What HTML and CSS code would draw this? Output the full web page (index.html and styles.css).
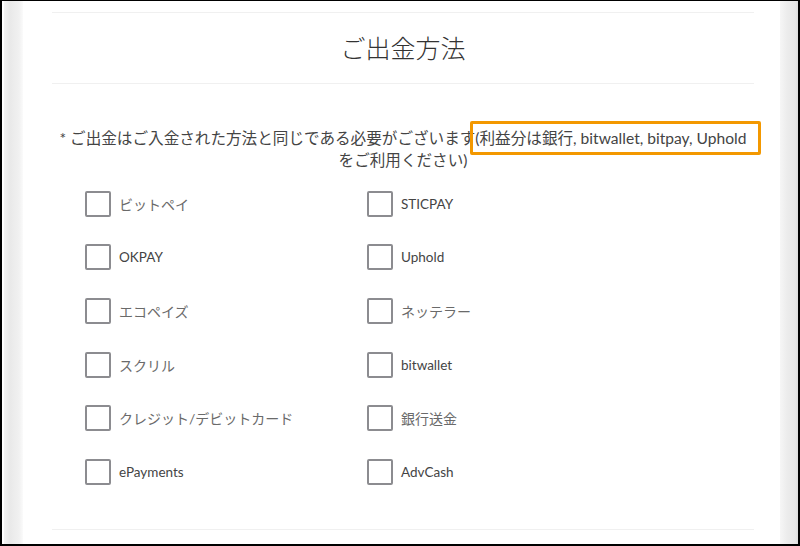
FILE: index.html
```html
<!DOCTYPE html>
<html lang="ja">
<head>
    <meta charset="UTF-8">
    <meta name="viewport" content="width=device-width, initial-scale=1.0">
    <title>ご出金方法</title>
    <link rel="stylesheet" href="styles.css">
</head>
<body>
    <div class="frame">
        <div class="side side-left"></div>
        <div class="card">
            <div class="panel">
                <h1 class="title">ご出金方法</h1>
                <p class="note">* ご出金はご入金された方法と同じである必要がございます<span class="mark">(利益分は銀行, bitwallet, bitpay, Uphold</span><br>をご利用ください)</p>

                <div class="methods">
                    <label class="method"><input type="checkbox"><span class="jp">ビットペイ</span></label>
                    <label class="method"><input type="checkbox"><span>STICPAY</span></label>
                    <label class="method"><input type="checkbox"><span>OKPAY</span></label>
                    <label class="method"><input type="checkbox"><span>Uphold</span></label>
                    <label class="method"><input type="checkbox"><span class="jp">エコペイズ</span></label>
                    <label class="method"><input type="checkbox"><span class="jp">ネッテラー</span></label>
                    <label class="method"><input type="checkbox"><span class="jp">スクリル</span></label>
                    <label class="method"><input type="checkbox"><span>bitwallet</span></label>
                    <label class="method"><input type="checkbox"><span class="jp">クレジット/デビットカード</span></label>
                    <label class="method"><input type="checkbox"><span class="jp">銀行送金</span></label>
                    <label class="method"><input type="checkbox"><span>ePayments</span></label>
                    <label class="method"><input type="checkbox"><span>AdvCash</span></label>
                </div>
            </div>
        </div>
        <div class="side side-right"></div>
    </div>
</body>
</html>
```

FILE: styles.css
```css
body {
    margin: 0;
    font-family: Lato, "Noto Sans CJK JP", sans-serif;
    color: #444444;
    background: #ffffff;
}
.frame {
    display: flex;
    height: 546px;
    box-sizing: border-box;
    border: 2px solid #000000;
    border-top-width: 1px;
    overflow: hidden;
}
.side {
    width: 20px;
    flex-shrink: 0;
}
.side-left {
    margin-left: 2px;
    width: 19px;
    background: linear-gradient(to right, #f3f3f3, #e9e9e9 30%, #f1f1f1 80%, #fbfbfb);
}
.side-right {
    width: 18px;
    background: linear-gradient(to right, #f6f6f6, #ececec 40%, #e6e6e6 85%, #dcdcdc);
}
.card {
    flex: 1;
    background: #ffffff;
}
.panel {
    margin: 11px 26px 0 29px;
    border-top: 1px solid #f0f0f0;
}
.title {
    margin: 0;
    height: 70px;
    line-height: 70px;
    text-align: center;
    font-size: 25px;
    font-weight: 300;
    color: #333333;
    border-bottom: 1px solid #f0f0f0;
}
.note {
    margin: 43px 0 0;
    text-align: center;
    font-size: 15.6px;
    line-height: 22px;
    color: #444444;
}
.mark {
    position: relative;
}
.mark::after {
    content: "";
    position: absolute;
    top: -8px;
    bottom: -8px;
    left: -5px;
    right: -14px;
    border: 3px solid #f39800;
    border-radius: 2px;
}
.methods {
    display: grid;
    grid-template-columns: 282px 282px;
    grid-auto-rows: 53.6px;
    margin-top: 6px;
    padding: 0 0 30px 33px;
    border-bottom: 1px solid #f0f0f0;
}
.method {
    display: flex;
    align-items: center;
    gap: 8px;
    font-size: 13.5px;
    color: #444444;
}
.method input {
    appearance: none;
    margin: 0;
    width: 26px;
    height: 26px;
    box-sizing: border-box;
    border: 2px solid #8c8c90;
    border-radius: 2px;
    background: #ffffff;
}
.method .jp {
    color: #6a6a6a;
    font-size: 14px;
}
```
